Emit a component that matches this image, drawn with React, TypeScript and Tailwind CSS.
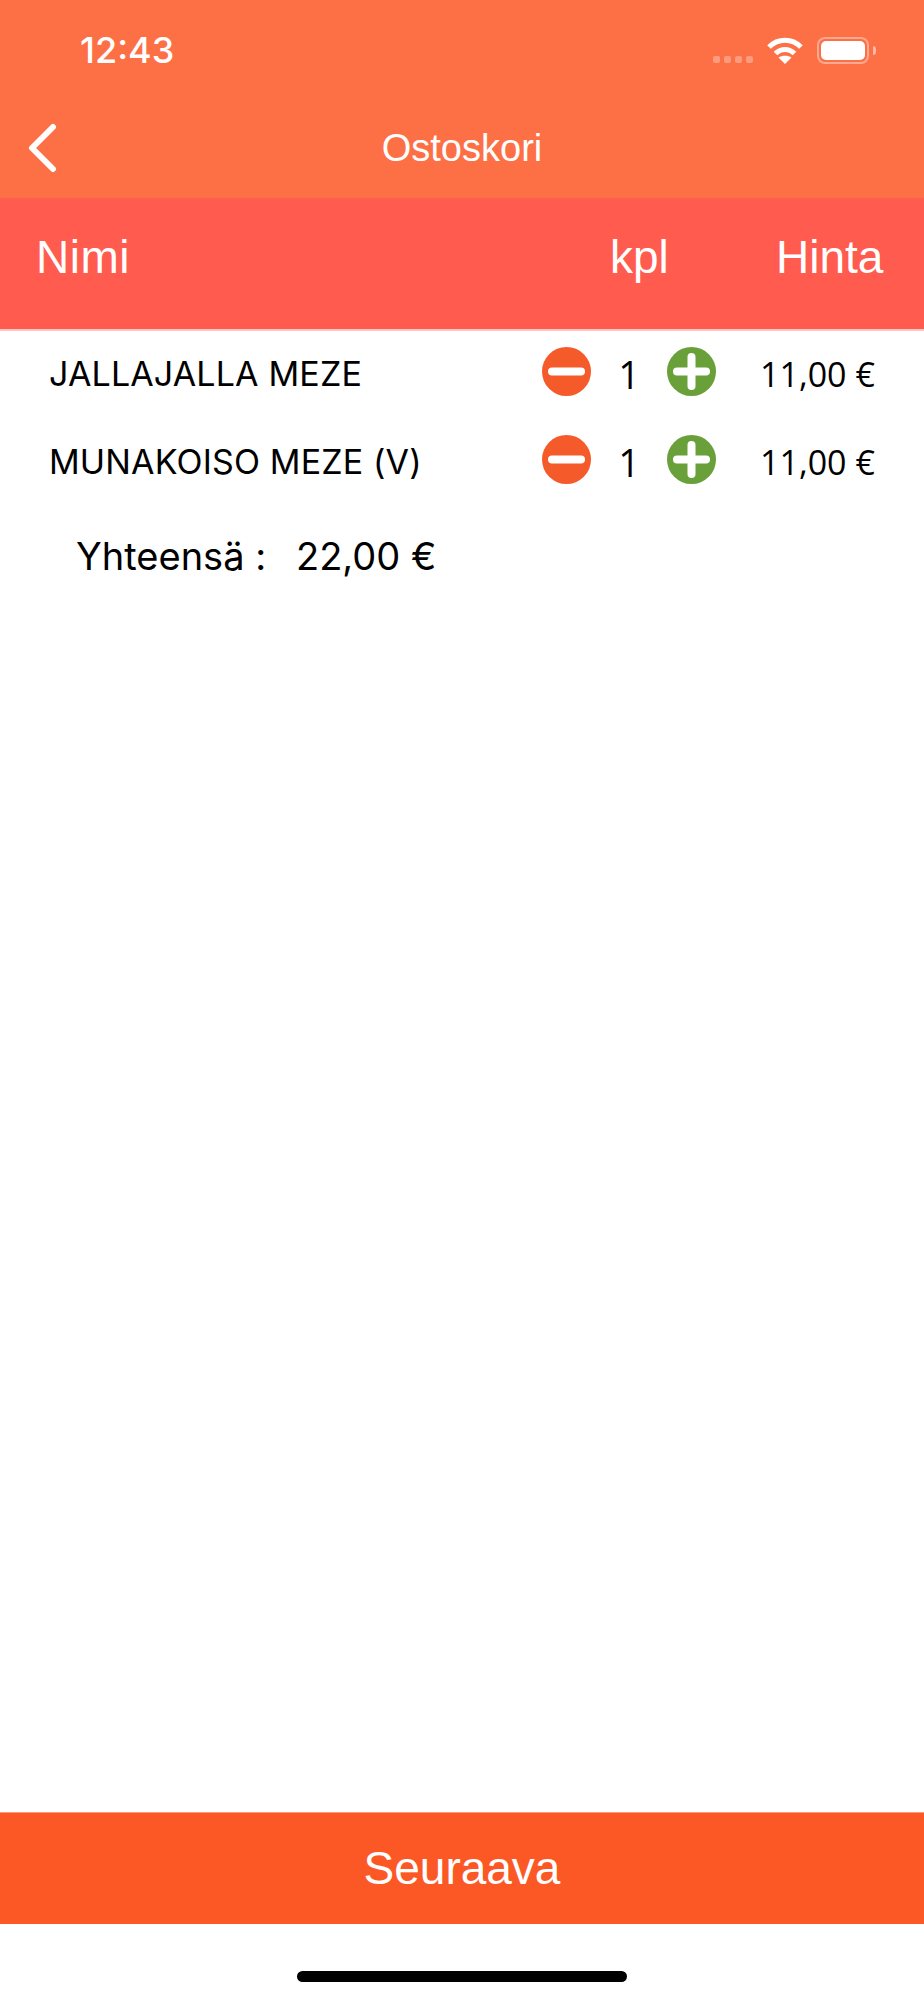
const sans = "font-['Liberation_Sans',Arial,sans-serif]";
const open = "font-['Open_Sans',sans-serif]";
const inter = "font-['Inter',sans-serif]";

type Item = { name: string; qty: number; price: string };

const items: Item[] = [
  { name: 'JALLAJALLA MEZE', qty: 1, price: '11,00 €' },
  { name: 'MUNAKOISO MEZE (V)', qty: 1, price: '11,00 €' },
];

function StatusIcons() {
  return (
    <div className="flex items-center">
      <div className="flex gap-[4px] mr-[14px] mt-[19px]">
        <span className="w-[7px] h-[7px] rounded-[2px] bg-white/30" />
        <span className="w-[7px] h-[7px] rounded-[2px] bg-white/30" />
        <span className="w-[7px] h-[7px] rounded-[2px] bg-white/30" />
        <span className="w-[7px] h-[7px] rounded-[2px] bg-white/30" />
      </div>
      <svg width="36" height="27" viewBox="0 0 36 27" fill="none" stroke="white" strokeWidth="5">
        <path d="M2 10 C11 1 25 1 34 10" />
        <path d="M8.5 16.5 C14 11 22 11 27.5 16.5" />
        <path d="M18 27 L11.5 20.5 C15 18 21 18 24.5 20.5 Z" fill="white" stroke="none" />
      </svg>
      <div className="ml-[14px] flex items-center">
        <div className="w-[52px] h-[27px] rounded-[8px] border-2 border-white/40 p-[2px]">
          <div className="w-full h-full rounded-[5px] bg-white" />
        </div>
        <div className="ml-[4px] w-[3px] h-[9px] rounded-r-full bg-white/50" />
      </div>
    </div>
  );
}

function RoundButton({ color, plus }: { color: string; plus?: boolean }) {
  return (
    <svg width="49" height="49" viewBox="0 0 49 49" className="shrink-0">
      <circle cx="24.5" cy="24.5" r="24.5" fill={color} />
      <path d="M10 24.5 H39" stroke="white" strokeWidth="8" strokeLinecap="round" />
      {plus && <path d="M24.5 10 V39" stroke="white" strokeWidth="8" strokeLinecap="round" />}
    </svg>
  );
}

function Row({ item }: { item: Item }) {
  return (
    <div className="flex items-center h-[49px] mb-[39px]">
      <div className={`${inter} ml-[49px] w-[493px] pt-[5px] text-[34px] tracking-[0.15px] leading-none text-black`}>{item.name}</div>
      <RoundButton color="#F55A2A" />
      <div className={`${open} w-[76px] pt-[4px] text-center text-[38px] leading-none text-black`}>{item.qty}</div>
      <RoundButton color="#69A03A" plus />
      <div className={`${open} ml-[44px] pt-[4px] text-[34px] leading-none text-black whitespace-nowrap`}>{item.price}</div>
    </div>
  );
}

export default function App() {
  return (
    <div className={`${sans} w-[924px] h-[2000px] bg-white flex flex-col`}>
      <div className="h-[198px] bg-[#FD7046] flex flex-col text-white">
        <div className="h-[100px] flex items-center justify-between pl-[80px] pr-[48px]">
          <span className={`${inter} text-[36px] font-medium`}>12:43</span>
          <StatusIcons />
        </div>
        <div className="relative flex-1 flex items-center justify-center pb-[2px]">
          <svg width="30" height="50" viewBox="0 0 30 50" fill="none" stroke="white" strokeWidth="6" strokeLinecap="round" strokeLinejoin="round" className="absolute left-[27px] top-[23px]">
            <path d="M26 4 L5 25 L26 46" />
          </svg>
          <span className="text-[38px]">Ostoskori</span>
        </div>
      </div>
      <div className="h-[133px] bg-[#FF5B4F] border-b-2 border-[#FFC5BE] text-white text-[46px] flex items-center pl-[36px] pb-[12px]">
        <span className="w-[574px] tracking-[0.5px]">Nimi</span>
        <span className="w-[166px]">kpl</span>
        <span>Hinta</span>
      </div>
      <div className="pt-[16px]">
        {items.map((item) => (
          <Row key={item.name} item={item} />
        ))}
      </div>
      <div className={`${inter} ml-[76px] flex text-[38px] leading-none text-black mt-[14px]`}>
        <span className="w-[220px]">Yhteensä :</span>
        <span>22,00 €</span>
      </div>
      <div className="flex-1" />
      <div className="h-[112px] bg-[#FC5826] border-t border-[#FF9A7E] flex items-center justify-center text-white text-[46px]">
        Seuraava
      </div>
      <div className="h-[76px] flex justify-center pt-[47px]">
        <div className="w-[330px] h-[11px] rounded-full bg-black" />
      </div>
    </div>
  );
}
